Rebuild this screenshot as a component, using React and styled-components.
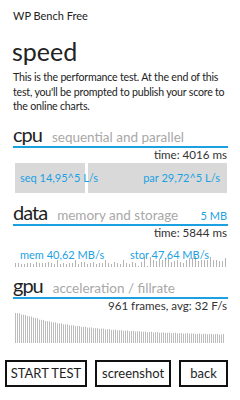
import React from "react";
import styled, { createGlobalStyle } from "styled-components";

const Global = createGlobalStyle`
  html, body { margin: 0; padding: 0; background: #fff; }
  body { font-family: Lato, "Open Sans", sans-serif; color: #1e1e1e; }
`;

const Page = styled.div`
  width: 240px;
  height: 400px;
  box-sizing: border-box;
  padding: 8px 12px 0 13px;
  display: flex;
  flex-direction: column;
  overflow: hidden;
`;

const AppTitle = styled.div`
  font-size: 11px;
  line-height: 16px;
  color: #222;
`;

const PageTitle = styled.h1`
  margin: 12px 0 0 -1px;
  font-size: 25px;
  font-weight: 400;
  line-height: 30px;
  color: #222;
`;

const Description = styled.p`
  margin: 4px 0 0;
  font-size: 10.6px;
  letter-spacing: -0.2px;
  line-height: 14.5px;
  color: #222;
`;

const Section = styled.section`
  margin-top: ${(p) => p.$top}px;
  display: flex;
  flex-direction: column;
`;

const Header = styled.div`
  display: flex;
  align-items: baseline;
  gap: 10px;
  padding-bottom: 1px;
  border-bottom: 2px solid #1ba1e2;
`;

const Name = styled.span`
  font-size: 20px;
  letter-spacing: -1px;
  line-height: 22px;
  color: #222;
`;

const Sub = styled.span`
  font-size: 13.5px;
  color: #a8a8a8;
  flex: 1;
`;

const Extra = styled.span`
  font-size: 11px;
  color: #1ba1e2;
  margin-right: 1px;
`;

const Meta = styled.div`
  text-align: right;
  font-size: 11.6px;
  line-height: 14px;
  color: #333;
  margin-right: 1px;
`;

const Bars = styled.div`
  display: flex;
  gap: 3px;
  height: 30px;
  margin: 1px 0 0 2px;
  width: 212px;
`;

const Bar = styled.div`
  background: #d9d9d9;
  display: flex;
  align-items: center;
  justify-content: ${(p) => (p.$right ? "flex-end" : "flex-start")};
  padding: 0 ${(p) => (p.$right ? "7px" : "0")} 0 ${(p) => (p.$right ? "0" : "5px")};
  box-sizing: border-box;
  white-space: nowrap;
  font-size: 11px;
  color: #1ba1e2;
  position: relative;
  z-index: ${(p) => (p.$right ? 0 : 1)};
`;

const DataChart = styled.div`
  position: relative;
  margin: 9px 0 0 2px;
  height: 18px;
  width: 212px;
`;

const Labels = styled.div`
  position: absolute;
  left: 5px;
  right: 0;
  top: 0;
  display: flex;
  justify-content: space-between;
  font-size: 11px;
  line-height: 12px;
  color: #1ba1e2;
  z-index: 1;
`;

const ChartSvg = styled.svg`
  display: block;
`;

const GpuChart = styled.div`
  margin: 0 0 0 2px;
`;

const Buttons = styled.div`
  display: flex;
  gap: 8px;
  margin: 17px 0 0 -8px;
`;

const Button = styled.button`
  height: 27px;
  box-sizing: border-box;
  border: 2px solid #111;
  background: #fff;
  font-family: inherit;
  font-size: 13px;
  color: #1e1e1e;
  padding: 0;
  width: ${(p) => p.$w}px;
`;

const dataHeights = (() => {
  const arr = [];
  let s = 7;
  for (let i = 0; i < 71; i++) {
    s = (s * 9301 + 49297) % 233280;
    const r = s / 233280;
    let h = 3 + Math.round(r * 2);
    if (i > 40) h = 4 + Math.round(r * 7);
    if (i === 14 || i === 20 || i === 30 || i === 36) h = 7;
    if (i === 41 || i === 44) h = 1;
    arr.push(h);
  }
  return arr;
})();

const gpuHeights = (() => {
  const arr = [];
  for (let i = 0; i < 105; i++) {
    const t = i / 104;
    const h = 9 + 21 * Math.exp(-t * 3.2) - 1.5 * t + (i < 12 ? 0.5 : 0) + ((i * 7) % 3) * 0.3;
    arr.push(h);
  }
  return arr;
})();

export default function App() {
  const seq = 14.95;
  const par = 29.72;
  const total = 212 - 3;
  const seqW = Math.round((total * seq) / (seq + par));
  return (
    <>
      <Global />
      <Page>
        <AppTitle>WP Bench Free</AppTitle>
        <PageTitle>speed</PageTitle>
        <Description>
          This is the performance test. At the end of this test, you'll be prompted to publish your score to the online charts.
        </Description>

        <Section $top={9}>
          <Header>
            <Name>cpu</Name>
            <Sub>sequential and parallel</Sub>
          </Header>
          <Meta>time: 4016 ms</Meta>
          <Bars>
            <Bar style={{ width: seqW }}>seq 14,95^5 L/s</Bar>
            <Bar $right style={{ width: total - seqW }}>par 29,72^5 L/s</Bar>
          </Bars>
        </Section>

        <Section $top={8}>
          <Header>
            <Name>data</Name>
            <Sub>memory and storage</Sub>
            <Extra>5 MB</Extra>
          </Header>
          <Meta>time: 5844 ms</Meta>
          <DataChart>
            <Labels>
              <span>mem 40,62 MB/s</span>
              <span style={{ marginRight: 18 }}>stor 47,64 MB/s</span>
            </Labels>
            <ChartSvg width="212" height="18" viewBox="0 0 212 18">
              {dataHeights.map((h, i) => (
                <rect key={i} x={i * 3} y={18 - h} width="1" height={h} fill="#b4b4b4" />
              ))}
            </ChartSvg>
          </DataChart>
        </Section>

        <Section $top={7}>
          <Header>
            <Name>gpu</Name>
            <Sub>acceleration / fillrate</Sub>
          </Header>
          <Meta>961 frames, avg: 32 F/s</Meta>
          <GpuChart>
            <ChartSvg width="212" height="30" viewBox="0 0 212 30">
              {gpuHeights.map((h, i) => (
                <rect key={i} x={i * 2} y={30 - h} width="1" height={h} fill="#bcbcbc" />
              ))}
            </ChartSvg>
          </GpuChart>
        </Section>

        <Buttons>
          <Button $w={84}>START TEST</Button>
          <Button $w={78}>screenshot</Button>
          <Button $w={50}>back</Button>
        </Buttons>
      </Page>
    </>
  );
}
